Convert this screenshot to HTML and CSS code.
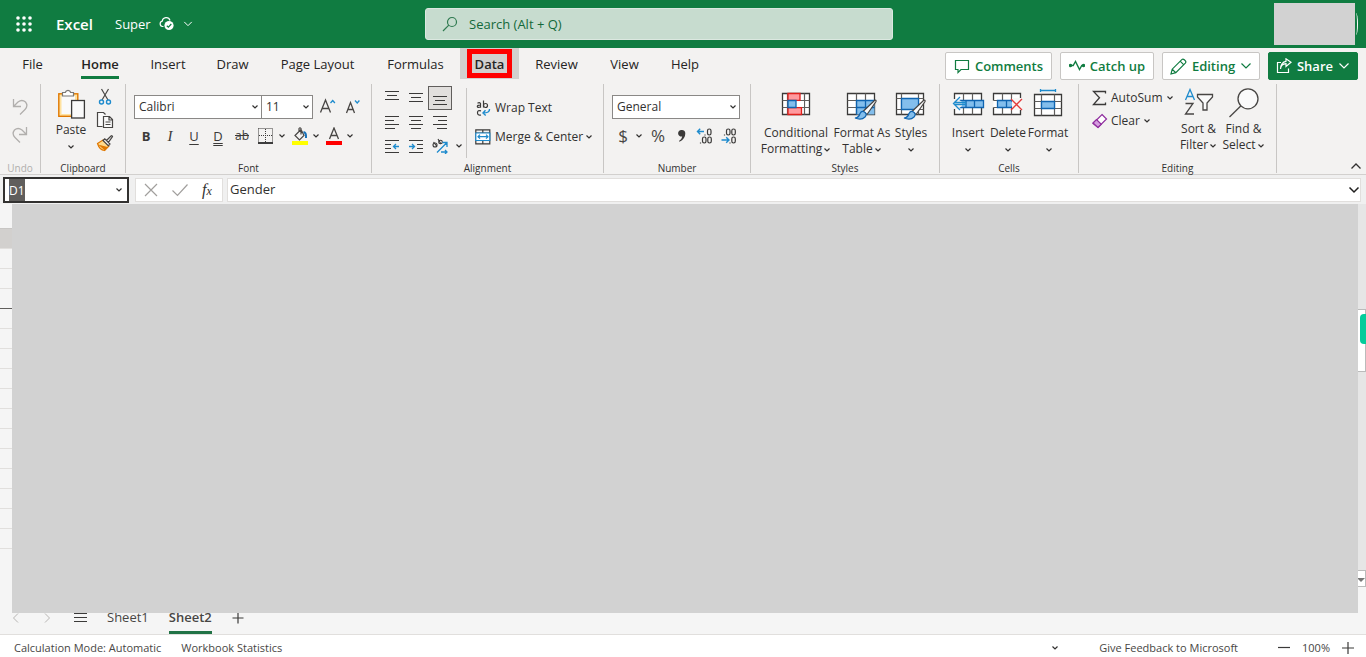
FILE: index.html
```html
<!DOCTYPE html>
<html lang="en">
<head>
<meta charset="utf-8">
<meta name="viewport" content="width=device-width, initial-scale=1">
<title>Super - Excel</title>
<link rel="stylesheet" href="styles.css">
</head>
<body>
<svg class="defs" width="0" height="0" aria-hidden="true">
  <symbol id="chev" viewBox="0 0 8 8"><path d="M1.5 2.5 4 5 6.500 2.500" fill="none" stroke="currentColor" stroke-width="1.200"/></symbol>
  <symbol id="chev-lg" viewBox="0 0 12 12"><path d="M1.500 3.500 6 8 10.500 3.500" fill="none" stroke="currentColor" stroke-width="1.200"/></symbol>
</svg>

<header class="topbar">
  <div class="brand">
    <button class="launcher" aria-label="App launcher">
      <svg width="18" height="18" viewBox="0 0 18 18" fill="#fff"><circle cx="3" cy="3" r="1.800"/><circle cx="9" cy="3" r="1.800"/><circle cx="15" cy="3" r="1.800"/><circle cx="3" cy="9" r="1.800"/><circle cx="9" cy="9" r="1.800"/><circle cx="15" cy="9" r="1.800"/><circle cx="3" cy="15" r="1.800"/><circle cx="9" cy="15" r="1.800"/><circle cx="15" cy="15" r="1.800"/></svg>
    </button>
    <span class="app-name">Excel</span>
    <button class="doc-name"><span>Super</span>
      <svg width="16" height="16" viewBox="0 0 16 16"><path d="M4.500 10.500H3.500a2.700 2.700 0 0 1-.3-5.300A4 4 0 0 1 11 4.500" fill="none" stroke="#fff" stroke-width="1.200"/><circle cx="10" cy="9.500" r="4.600" fill="#fff"/><path d="M7.800 9.700 9.400 11.200 12.300 8" fill="none" stroke="#107c41" stroke-width="1.200"/></svg>
      <svg class="doc-chev" width="10" height="10"><use href="#chev-lg"/></svg>
    </button>
  </div>
  <label class="search">
    <svg width="16" height="16" viewBox="0 0 16 16" fill="none" stroke="#2f7a50" stroke-width="1.200"><circle cx="10" cy="6" r="4.500"/><path d="M6.800 9.200 1 15"/></svg>
    <input type="text" placeholder="Search (Alt + Q)" aria-label="Search">
  </label>
  <div class="account"><div class="account-block"></div></div>
</header>

<div class="tabrow">
  <nav class="tabs">
    <button>File</button><button class="current"><span>Home</span></button><button>Insert</button><button>Draw</button><button>Page Layout</button><button>Formulas</button><button class="data"><span>Data</span></button><button>Review</button><button>View</button><button>Help</button>
  </nav>
  <div class="actions">
    <button class="act w-comments"><svg width="16" height="16" viewBox="0 0 16 16" fill="none" stroke="currentColor" stroke-width="1.200"><path d="M1.500 2.500h13v9H7L4 14.500v-3H1.500z"/></svg>Comments</button>
    <button class="act w-catch"><svg width="16" height="16" viewBox="0 0 16 16" fill="none" stroke="currentColor" stroke-width="1.400"><path d="M1.500 7.500h2.700L6.500 3.500l4 8 2.300-4h2"/><circle cx="1.500" cy="7.500" r="1" fill="currentColor"/><circle cx="14.500" cy="7.500" r="1" fill="currentColor"/></svg>Catch up</button>
    <button class="act w-edit"><svg width="17" height="17" viewBox="0 0 17 17" fill="none" stroke="currentColor" stroke-width="1.200"><path d="M1 16l1.200-4.800L11.800 1.600q1.200-1 2.500.2l.9.900q1.200 1.300.1 2.500L5.800 14.700zM10.200 3.200l3.600 3.600M2.200 11.200l3.600 3.500"/></svg>Editing<svg width="12" height="12"><use href="#chev-lg"/></svg></button>
    <button class="act share w-share"><svg width="16" height="16" viewBox="0 0 16 16" fill="none" stroke="currentColor" stroke-width="1.200"><path d="M5 4.500H1.500v10h11v-4M4.500 11q.5-5 5.500-5.300V8.500L15 4.300 10 .8v2.500Q5 4 4.500 11z"/></svg>Share<svg width="12" height="12"><use href="#chev-lg"/></svg></button>
  </div>
</div>

<div class="ribbon">
  <section class="group g-undo">
    <div class="body">
      <button class="ico" aria-label="Undo"><svg width="18" height="18" viewBox="0 0 18 18" fill="none" stroke="#b1afad" stroke-width="1.300"><path d="M2.500 1v7.500H10M2.500 8.500 7 4q4-3 7.500 0 3 4-.5 7.500L9 16.500"/></svg></button>
      <button class="ico" aria-label="Redo"><svg width="18" height="18" viewBox="0 0 18 18" fill="none" stroke="#b1afad" stroke-width="1.300"><path d="M15.500 1v7.500H8M15.500 8.500 11 4q-4-3-7.500 0-3 4 .5 7.500l5 5"/></svg></button>
    </div>
    <h2 class="dim">Undo</h2>
  </section>

  <section class="group g-clip">
    <div class="body">
      <button class="paste">
        <svg width="30" height="32" viewBox="0 0 30 32"><rect x="2.800" y="5.800" width="19" height="22.500" fill="#ffe2a0" stroke="#e07800" stroke-width="1.400"/><rect x="5.500" y="8" width="13.500" height="18" fill="#fafafa"/><path d="M6.500 8V4.500h2.800a2.800 2.800 0 0 1 5.400 0h2.800V8z" fill="#fff" stroke="#797775" stroke-width="1.200"/><rect x="15.600" y="12.500" width="12.800" height="17.500" fill="#fafafa" stroke="#3b3a39" stroke-width="1.300"/></svg>
        <span>Paste</span><svg class="chev" width="8" height="8"><use href="#chev"/></svg>
      </button>
      <div class="stack">
        <button class="ico" aria-label="Cut"><svg width="18" height="18" viewBox="0 0 18 18" fill="none"><path d="M5.500 1 12 12M12.500 1 6 12" stroke="#484644" stroke-width="1.200"/><circle cx="5.500" cy="14" r="2" stroke="#1e8bcd" stroke-width="1.400"/><circle cx="12.500" cy="14" r="2" stroke="#1e8bcd" stroke-width="1.400"/></svg></button>
        <button class="ico" aria-label="Copy"><svg width="18" height="18" viewBox="0 0 18 18" fill="#fafafa" stroke="#484644" stroke-width="1.200"><path d="M6.500 15.500h-5v-14h6l2 2M7.500 5.500h6l3 3v8h-9zM13 5.500v3.500h3.500M9.500 11h5M9.500 13.500h5"/></svg></button>
        <button class="ico" aria-label="Format painter"><svg width="18" height="18" viewBox="0 0 18 18"><path d="M1.500 9.500 7 6l6 6-4.500 4.500q-5-.5-7-7z" fill="#ffd98a" stroke="#e07800" stroke-width="1.200"/><path d="M2 10.500 11.500 13 9 16.500z" fill="#e07800"/><path d="M7 6.500 8.800 4.800 14 10l-1.700 1.700zM10.500 6.500 15 2q1.200-.8 1.500.5L12.400 8.300" fill="#fafafa" stroke="#484644" stroke-width="1.200"/></svg></button>
      </div>
    </div>
    <h2>Clipboard</h2>
  </section>

  <section class="group g-font">
    <div class="body">
      <div class="row fonts">
        <div class="pick font-name"><select aria-label="Font"><option>Calibri</option></select><svg class="chev" width="8" height="8"><use href="#chev"/></svg></div>
        <div class="pick font-size"><select aria-label="Font size"><option>11</option></select><svg class="chev" width="8" height="8"><use href="#chev"/></svg></div>
        <button class="ico grow" aria-label="Increase font size"><svg width="18" height="18" viewBox="0 0 18 18" fill="none"><path d="M1.500 14.500 6.500 2l5 12.500M3 10.500h7" stroke="#484644" stroke-width="1.300"/><path d="M11.500 5 13.700 2.500 15.900 5" stroke="#1e8bcd" stroke-width="1.300"/></svg></button>
        <button class="ico" aria-label="Decrease font size"><svg width="18" height="18" viewBox="0 0 18 18" fill="none"><path d="M2.500 15 6.500 4.500l4 10.500M4 11.500h5" stroke="#484644" stroke-width="1.300"/><path d="M11 2.500 13.200 5 15.400 2.500" stroke="#1e8bcd" stroke-width="1.300"/></svg></button>
      </div>
      <div class="row formats">
        <button class="ltr bold">B</button><button class="ltr ital">I</button><button class="ltr und">U</button><button class="ltr dbl">D</button><button class="ltr strike">ab</button>
        <button class="ico" aria-label="Borders"><svg width="16" height="16" viewBox="0 0 16 16" fill="none" stroke="#3b3a39"><path d="M.5.500h14v13M.5.500v13M7.500 1v13M1 7.500h14" stroke-dasharray="1 1"/><path d="M0 15h15" stroke="#000" stroke-width="1.500"/></svg></button>
        <svg class="chev" width="8" height="8"><use href="#chev"/></svg>
        <button class="ico" aria-label="Fill color"><svg width="16" height="18" viewBox="0 0 16 18" fill="none"><path d="M3 8.500 9 2.500l3 6-4.500 4.500zM7 4V1.500q1-1.500 2 0v6" stroke="#484644" stroke-width="1.200"/><path d="M11.500 5q3 .5 2.500 6" stroke="#1670b8" stroke-width="2"/><path d="M0 14h16v4H0z" fill="#ff0"/></svg></button>
        <svg class="chev" width="8" height="8"><use href="#chev"/></svg>
        <button class="ico" aria-label="Font color"><svg width="16" height="18" viewBox="0 0 16 18" fill="none"><path d="M3.500 12 8 1l4.500 11M5 8.500h6" stroke="#484644" stroke-width="1.300"/><path d="M0 14h16v4H0z" fill="red"/></svg></button>
        <svg class="chev" width="8" height="8"><use href="#chev"/></svg>
      </div>
    </div>
    <h2>Font</h2>
  </section>

  <section class="group g-align">
    <div class="body">
      <div class="align-grid">
        <button class="ico" aria-label="Top align"><svg width="14" height="14" viewBox="0 0 14 14" stroke="#3b3a39"><path d="M0 .5h14M2 4.500h10M0 8.500h14"/></svg></button>
        <button class="ico" aria-label="Middle align"><svg width="14" height="14" viewBox="0 0 14 14" stroke="#3b3a39"><path d="M0 2.500h14M2 6.500h10M0 10.500h14"/></svg></button>
        <button class="ico on" aria-label="Bottom align"><svg width="14" height="14" viewBox="0 0 14 14" stroke="#3b3a39"><path d="M0 5.500h14M2 9.500h10M0 13.500h14"/></svg></button><i></i>
        <button class="ico" aria-label="Align left"><svg width="14" height="14" viewBox="0 0 14 14" stroke="#3b3a39"><path d="M0 1.500h14M0 5.500h9M0 9.500h14M0 13.500h10"/></svg></button>
        <button class="ico" aria-label="Center"><svg width="14" height="14" viewBox="0 0 14 14" stroke="#3b3a39"><path d="M0 1.500h14M2 5.500h10M0 9.500h14M2 13.500h10"/></svg></button>
        <button class="ico" aria-label="Align right"><svg width="14" height="14" viewBox="0 0 14 14" stroke="#3b3a39"><path d="M0 1.500h14M5 5.500h9M0 9.500h14M4 13.500h10"/></svg></button><i></i>
        <button class="ico" aria-label="Decrease indent"><svg width="14" height="14" viewBox="0 0 14 14" fill="none" stroke="#3b3a39"><path d="M0 1.500h14M0 5.500h6M0 9.500h6M0 13.500h14"/><path d="M14 7.500H8.500M11 5 8.500 7.500 11 10" stroke="#1e8bcd" stroke-width="1.300"/></svg></button>
        <button class="ico" aria-label="Increase indent"><svg width="14" height="14" viewBox="0 0 14 14" fill="none" stroke="#3b3a39"><path d="M0 1.500h14M8 5.500h6M8 9.500h6M0 13.500h14"/><path d="M0 7.500h5.500M3 5l2.500 2.500L3 10" stroke="#1e8bcd" stroke-width="1.300"/></svg></button>
        <button class="ico" aria-label="Orientation"><svg width="16" height="16" viewBox="0 0 16 16" fill="none" stroke="#3b3a39" stroke-width="1.100"><circle cx="3" cy="7" r="2"/><path d="M1.500 4 5 8.500M6 1l3 5"/><circle cx="8.500" cy="4" r="1.800"/><g stroke="#1e8bcd" stroke-width="1.300"><path d="M5 14.500 15 4.500M10.500 4.500H15V9M9 14h6M13 12l2 2-2 2"/></g></svg></button>
        <svg class="chev" width="8" height="8"><use href="#chev"/></svg>
      </div>
      <div class="wraps">
        <button class="line"><svg width="16" height="18" viewBox="0 0 16 18" fill="none" stroke="#3b3a39" stroke-width="1.200"><path d="M2.500 4.200q2-1.200 3 .3v4.200M5.500 6q-3.200 0-3.200 1.500T5.500 8M8.500 1.500v7"/><circle cx="10.500" cy="6.500" r="2"/><path d="M6 11.800q-3.500-1-3.500 2t3.500 2.200"/><path d="M14.500 10q.5 4-6.500 4M10.500 11.200 8 14l2.700 2.500" stroke="#1e8bcd" stroke-width="1.400"/></svg>Wrap Text</button>
        <button class="line"><svg width="16" height="16" viewBox="0 0 16 16" fill="none" stroke="#3b3a39" stroke-width="1.200"><path d="M.8.800h14v14H.8zM.8 4h14M.8 11.500h14M7.800 1v3M7.800 11.500v3"/><path d="M.8 4h14v7.500H.8z" fill="#fff" stroke="#1e8bcd"/><path d="M3 7.700h10M5 5.700 3 7.700l2 2M11 5.700l2 2-2 2" stroke="#1e8bcd"/></svg>Merge &amp; Center<svg class="chev" width="8" height="8"><use href="#chev"/></svg></button>
      </div>
    </div>
    <h2>Alignment</h2>
  </section>

  <section class="group g-num">
    <div class="body">
      <div class="pick num-format"><select aria-label="Number format"><option>General</option></select><svg class="chev" width="8" height="8"><use href="#chev"/></svg></div>
      <div class="row nums">
        <button class="sym">$</button><svg class="chev" width="8" height="8"><use href="#chev"/></svg><button class="sym pct">%</button>
        <button class="ico comma" aria-label="Comma style"><svg width="10" height="14" viewBox="0 0 10 14"><path d="M4.500 1a3.300 3.300 0 0 1 3.800 3.500Q8.300 10 2.500 12.800L2 12q3-2 3.200-4.500A3.300 3.300 0 1 1 4.500 1z" fill="#3b3a39"/></svg></button>
        <button class="ico dec" aria-label="Increase decimal"><svg width="18" height="18" viewBox="0 0 18 18" fill="none" stroke="#3b3a39" stroke-width="1.200"><path d="M9 7.500v1M4.500 15.500v1"/><rect x="11.500" y="2" width="3.500" height="6" rx="1.700"/><rect x="6.500" y="10" width="3.500" height="6" rx="1.700"/><rect x="11.800" y="10" width="3.500" height="6" rx="1.700"/><path d="M8 4.500H1.500M4.200 1.800 1.500 4.500l2.700 2.700" stroke="#1e8bcd" stroke-width="1.400"/></svg></button>
        <button class="ico" aria-label="Decrease decimal"><svg width="18" height="18" viewBox="0 0 18 18" fill="none" stroke="#3b3a39" stroke-width="1.200"><path d="M4.500 7.500v1M10 15.500v1"/><rect x="6.500" y="2" width="3.500" height="6" rx="1.700"/><rect x="11.800" y="2" width="3.500" height="6" rx="1.700"/><rect x="11.800" y="10" width="3.500" height="6" rx="1.700"/><path d="M1.500 13H9M6.200 10.300 9 13l-2.800 2.700" stroke="#1e8bcd" stroke-width="1.400"/></svg></button>
      </div>
    </div>
    <h2>Number</h2>
  </section>

  <section class="group g-styles">
    <div class="body">
      <button class="big b-cond"><svg width="32" height="30" viewBox="0 0 32 30"><path d="M2.500 2.500h27v21h-27z" fill="#fff" stroke="#3b3a39" stroke-width="1.300"/><path d="M2.500 9.500h27M2.500 16.500h27M7.500 2.500v21M24.500 2.500v21" stroke="#605e5c" stroke-width="1.200"/><path d="M8 2.500h12v7H8zM8 16.500h13.500v7H8z" fill="#ff9a9e" stroke="#e0201c" stroke-width="1.300"/><path d="M16 10.100h8v5.800h-8z" fill="#fff"/><path d="M8 9.500h8v7H8z" fill="#83beec" stroke="#0f64b0" stroke-width="1.300"/></svg><span>Conditional<br>Formatting<svg class="chev" width="8" height="8"><use href="#chev"/></svg></span></button>
      <button class="big b-table"><svg width="32" height="30" viewBox="0 0 32 30"><path d="M1.500 2.500h27v21h-27z" fill="#fff" stroke="#3b3a39" stroke-width="1.300"/><path d="M10.500 9.500h18v14h-18z" fill="#83beec"/><path d="M1.500 9.500h27M1.500 16.500h9M10.500 2.500v21M19.500 2.500v7" stroke="#605e5c" stroke-width="1.200"/><path d="M10.500 23.500v-14h18M10.500 16.500h18M19.500 9.500v14" fill="none" stroke="#0f64b0" stroke-width="1.300"/><path d="M17 20.500 28.500 9.500q2-1.200 1.500 1L21 23.500z" fill="#fafafa" stroke="#484644" stroke-width="1.200"/><path d="M9 27q4-.5 5-4.500 1.500-3 4.500-1.500 3 2 .5 5-3.500 3.500-10 1z" fill="#83beec" stroke="#0f64b0" stroke-width="1.200"/></svg><span>Format As<br>Table<svg class="chev" width="8" height="8"><use href="#chev"/></svg></span></button>
      <button class="big b-style"><svg width="32" height="30" viewBox="0 0 32 30"><path d="M1.500 2.500h27v21h-27z" fill="#fff" stroke="#3b3a39" stroke-width="1.300"/><path d="M1.500 7.500h27M1.500 18.500h27M6.500 2.500v21M23.500 2.500v21" stroke="#605e5c" stroke-width="1.200"/><path d="M6.500 7.500h17v11h-17z" fill="#83beec" stroke="#0f64b0" stroke-width="1.300"/><path d="M17 20.500 28.500 9.500q2-1.200 1.500 1L21 23.500z" fill="#fafafa" stroke="#484644" stroke-width="1.200"/><path d="M9 27q4-.5 5-4.500 1.500-3 4.500-1.500 3 2 .5 5-3.500 3.500-10 1z" fill="#83beec" stroke="#0f64b0" stroke-width="1.200"/></svg><span>Styles<br><svg class="chev" width="8" height="8"><use href="#chev"/></svg></span></button>
    </div>
    <h2>Styles</h2>
  </section>

  <section class="group g-cells">
    <div class="body">
      <button class="big"><svg width="34" height="30" viewBox="0 0 34 30" fill="none"><path d="M3.500 2.500h27v21h-27z" fill="#fff" stroke="#3b3a39" stroke-width="1.300"/><path d="M3.500 9.500h27M3.500 16.500h27M12.500 2.500v21M21.500 2.500v21" stroke="#605e5c" stroke-width="1.200"/><path d="M9 9.500h23.500v7H9z" fill="#83beec" stroke="#0f64b0" stroke-width="1.300"/><path d="M15 9.500v7M23.500 9.500v7" stroke="#0f64b0" stroke-width="1.300"/><path d="M0 8h7l4 3v4l-4 3H0z" fill="#f3f2f1"/><path d="M9 6 2.500 12.500 9 19M3 11.500h12M3 13.500h12" stroke="#1e8bcd" stroke-width="1.300"/></svg><span>Insert<br><svg class="chev" width="8" height="8"><use href="#chev"/></svg></span></button>
      <button class="big"><svg width="32" height="30" viewBox="0 0 32 30" fill="none"><path d="M1.500 9.500v-7h27v21h-27v-7" fill="#fff" stroke="#3b3a39" stroke-width="1.300"/><path d="M1.500 9.500h27M1.500 16.500h27M10.500 2.500v21M19.500 2.500v21" stroke="#605e5c" stroke-width="1.200"/><path d="M5.500 9.500h14l2.500 3.500-2.500 3.500h-14zM14.500 9.500v7" fill="#83beec" stroke="#0f64b0" stroke-width="1.300"/><path d="M20 7h10v12H20z" fill="#f8f7f6"/><path d="M19 8 30 19M30 8 19 19" stroke="#e33b3b" stroke-width="1.300"/></svg><span>Delete<br><svg class="chev" width="8" height="8"><use href="#chev"/></svg></span></button>
      <button class="big tall"><svg width="32" height="34" viewBox="0 0 32 34" fill="none"><path d="M2.500 6.500h27v21h-27z" fill="#fff" stroke="#3b3a39" stroke-width="1.300"/><path d="M2.500 13.500h27M2.500 20.500h27M9.500 6.500v21M22.500 6.500v21" stroke="#605e5c" stroke-width="1.200"/><path d="M9.500 13.500h13v7h-13z" fill="#83beec" stroke="#0f64b0" stroke-width="1.300"/><path d="M8.500 1v3M23.500 1v3M8.500 2.500h15" stroke="#1e8bcd" stroke-width="1.300"/></svg><span>Format<br><svg class="chev" width="8" height="8"><use href="#chev"/></svg></span></button>
    </div>
    <h2>Cells</h2>
  </section>

  <section class="group g-edit">
    <div class="body">
      <div class="sums">
        <button class="line"><svg width="16" height="16" viewBox="0 0 16 16" fill="none" stroke="#3b3a39" stroke-width="1.300"><path d="M13.500 3.500v-2h-12l6 6.300-6 6.700h12v-2"/></svg>AutoSum<svg class="chev" width="8" height="8"><use href="#chev"/></svg></button>
        <button class="line"><svg width="16" height="16" viewBox="0 0 16 16" stroke="#8f2d9e" stroke-width="1.200"><path d="M10 1.500 14.500 6 6 14.500 1 10.500z" fill="#fff"/><path d="M1 10 4.500 6.500 9.300 11.200 6 14.500z" fill="#d59ddf"/></svg>Clear<svg class="chev" width="8" height="8"><use href="#chev"/></svg></button>
      </div>
      <button class="big b-sort"><svg width="30" height="30" viewBox="0 0 30 30" fill="none"><path d="M1.500 12 6 1.500l4.500 10.500M3 8.500h6" stroke="#1e8bcd" stroke-width="1.300"/><path d="M1.500 15.500H9L1.500 26H10" stroke="#484644" stroke-width="1.300"/><path d="M13.500 6.500h15v2.500l-5.500 6v7h-4v-7l-5.500-6z" fill="#fafafa" stroke="#484644" stroke-width="1.300"/></svg><span>Sort &amp;<br>Filter<svg class="chev" width="8" height="8"><use href="#chev"/></svg></span></button>
      <button class="big b-find"><svg width="30" height="30" viewBox="0 0 30 30" fill="none" stroke="#484644" stroke-width="1.300"><circle cx="19" cy="10.800" r="10" fill="#fafafa"/><path d="M12 17.800.5 29"/></svg><span>Find &amp;<br>Select<svg class="chev" width="8" height="8"><use href="#chev"/></svg></span></button>
    </div>
    <h2>Editing</h2>
  </section>
  <button class="collapse" aria-label="Collapse ribbon"><svg width="12" height="12" viewBox="0 0 12 12"><path d="M1.500 8.500 6 4l4.500 4.500" fill="none" stroke="#323130" stroke-width="1.300"/></svg></button>
</div>

<div class="formulabar">
  <div class="namebox"><span class="sel">D1</span><button class="ico" aria-label="Name list"><svg class="chev" width="8" height="8"><use href="#chev"/></svg></button></div>
  <div class="fx">
    <button class="ico" aria-label="Cancel"><svg width="14" height="14" viewBox="0 0 14 14" stroke="#a19f9d" stroke-width="1.200"><path d="M1 1l12 12M13 1 1 13"/></svg></button>
    <button class="ico" aria-label="Enter"><svg width="16" height="14" viewBox="0 0 16 14" fill="none" stroke="#a19f9d" stroke-width="1.200"><path d="M.5 7.500 5.500 12.500 15.500 1.500"/></svg></button>
    <button class="fxb" aria-label="Insert function"><i>f</i><small>x</small></button>
  </div>
  <div class="formula"><input type="text" value="Gender" aria-label="Formula"><button class="ico" aria-label="Expand"><svg width="12" height="12" viewBox="0 0 12 12"><path d="M1.500 3.500 6 8 10.500 3.500" fill="none" stroke="#201f1e" stroke-width="1.500"/></svg></button></div>
</div>

<main class="work">
  <div class="sheet">
    <div class="rows">
      <b class="corner"></b><b class="head"></b><b></b><b></b><b class="dark"></b><b></b><b></b><b></b><b></b><b></b><b></b><b></b><b></b><b></b><b></b><b></b><b></b><b></b>
    </div>
    <div class="scroll"><div class="thumb"></div><div class="down"><svg width="8" height="6" viewBox="0 0 8 6"><path d="M0 1h8L4 5z" fill="#777"/></svg></div></div>
  </div>
  <div class="sheets">
    <button class="ico" aria-label="Previous sheet"><svg width="8" height="12" viewBox="0 0 8 12" fill="none" stroke="#b8b6b4"><path d="M6 1.500 1.500 6 6 10.500"/></svg></button>
    <button class="ico" aria-label="Next sheet"><svg width="8" height="12" viewBox="0 0 8 12" fill="none" stroke="#b8b6b4"><path d="M2 1.500 6.500 6 2 10.500"/></svg></button>
    <button class="ico list" aria-label="All sheets"><svg width="13" height="12" viewBox="0 0 13 12" stroke="#3b3a39"><path d="M0 1.500h13M0 5.500h13M0 9.500h13"/></svg></button>
    <button class="sh">Sheet1</button>
    <button class="sh active">Sheet2</button>
    <button class="ico" aria-label="New sheet"><svg width="12" height="12" viewBox="0 0 12 12" stroke="#3b3a39" stroke-width="1.200"><path d="M6 .5v11M.5 6h11"/></svg></button>
  </div>
  <div class="cover"></div>
  <div class="pin"></div>
</main>

<footer class="status">
  <span>Calculation Mode: Automatic</span>
  <span>Workbook Statistics</span>
  <button class="ico push" aria-label="Status options"><svg class="chev" width="8" height="8"><use href="#chev"/></svg></button>
  <button class="feedback">Give Feedback to Microsoft</button>
  <button class="ico" aria-label="Zoom out"><svg width="12" height="12" viewBox="0 0 12 12" stroke="#3b3a39" stroke-width="1.200"><path d="M0 5.500h12"/></svg></button>
  <button class="zoom">100%</button>
  <button class="ico" aria-label="Zoom in"><svg width="12" height="12" viewBox="0 0 12 12" stroke="#3b3a39" stroke-width="1.200"><path d="M6 0v12M0 6h12"/></svg></button>
</footer>
</body>
</html>
```
FILE: styles.css
```css
* { box-sizing: border-box; }
body {
  margin: 0;
  min-height: 100vh;
  display: flex;
  flex-direction: column;
  font-family: "Open Sans", "Noto Sans", sans-serif;
  font-size: 12px;
  line-height: 16px;
  color: #323130;
  background: #f3f2f1;
}
.defs { position: absolute; }
svg { display: block; flex: none; }
button, input, select {
  font: inherit;
  color: inherit;
  background: none;
  border: 0;
  border-radius: 0;
  padding: 0;
  margin: 0;
}
button { white-space: nowrap; }
h2 { margin: 0; font-size: 10px; line-height: 10px; font-weight: 400; text-align: center; }
.ico { display: flex; align-items: center; justify-content: center; }
.row { display: flex; align-items: center; }
.chev { color: #323130; }

/* Title bar */
.topbar {
  height: 48px;
  display: grid;
  grid-template-columns: 410fr 468px 462fr;
  align-items: center;
  padding: 0 11px 0 15px;
  background: #107c41;
  color: #fff;
}
.brand { display: flex; align-items: center; }
.app-name { margin-left: 23px; font-size: 15px; font-weight: 600; width: 59px; }
.doc-name { display: flex; align-items: center; font-size: 13px; gap: 8px; }
.search {
  display: flex;
  align-items: center;
  gap: 11px;
  height: 32px;
  padding: 0 16px;
  border-radius: 3px;
  border: 1px solid #dbe8e0;
  background: #c7dccf;
}
.search input { flex: 1; min-width: 0; font-size: 13px; color: #13693a; outline: 0; }
.search input::placeholder { color: #13693a; opacity: 1; }
.account { justify-self: end; }
.account-block { position: relative; width: 81px; height: 42px; background: #d2d2d2; }
.account-block::after {
  content: "";
  position: absolute;
  right: -3px;
  top: 10px;
  width: 3px;
  height: 22px;
  border-right: 1px solid #fff;
  border-radius: 0 100% 100% 0;
}

/* Tabs */
.tabrow { display: flex; justify-content: space-between; height: 36px; padding: 0 8px 0 6px; }
.tabs {
  display: grid;
  grid-template-columns: 59px 70px 66px 63px 107px 89px 59px 75px 61px 60px;
  height: 31px;
  font-size: 13px;
  color: #252423;
}
.tabs button:first-child { padding-right: 6px; }
.tabs .current { font-weight: 600; display: flex; justify-content: center; }
.tabs .current span { height: 31px; line-height: 32px; border-bottom: 3px solid #107c41; }
.tabs .data { display: flex; align-items: center; justify-content: center; background: #d2d0ce; font-weight: 600; }
.tabs .data span {
  width: 45px;
  height: 29px;
  line-height: 20px;
  border: 5px solid #f00;
}
.actions { display: flex; gap: 8px; padding-top: 4px; }
.act {
  height: 28px;
  display: flex;
  align-items: center;
  justify-content: center;
  gap: 5px;
  font-size: 13px;
  font-weight: 600;
  color: #107c41;
  background: #fff;
  border: 1px solid #c8c6c4;
  border-radius: 2px;
}
.w-comments { width: 107px; }
.w-catch { width: 94px; }
.w-edit { width: 98px; }
.w-share { width: 90px; }
.share { background: #107c41; border-color: #107c41; color: #fff; }

/* Ribbon */
.ribbon { display: flex; height: 91px; padding-bottom: 1px; border-bottom: 1px solid #d2d0ce; }
.group { display: flex; flex-direction: column; border-right: 1px solid #c8c6c4; }
.group .body { flex: 1; display: flex; }
.g-undo { width: 41px; }
.g-undo .body { flex-direction: column; gap: 10px; padding: 14px 0 0; align-items: center; }
.dim { color: #b1afad; }
.g-clip { width: 85px; }
.g-clip .body { gap: 7px; padding: 4px 0 0 14px; }
.paste { width: 32px; display: flex; flex-direction: column; align-items: center; justify-content: flex-start; gap: 2px; }
.paste .chev { margin-top: 3px; }
.stack { display: flex; flex-direction: column; gap: 5px; }
.stack .ico { width: 22px; }
.g-font { width: 246px; }
.g-font .body { flex-direction: column; gap: 5px; padding: 11px 0 0 8px; }
.pick { display: grid; grid-template-columns: 1fr 8px; align-items: center; height: 24px; padding-right: 2px; border: 1px solid #8a8886; background: #fff; }
.pick select { grid-area: 1 / 1 / 2 / 3; appearance: none; width: 100%; height: 22px; padding-left: 4px; font-size: 12px; }
.pick .chev { grid-area: 1 / 2; pointer-events: none; }
.font-name { width: 128px; }
.font-size { width: 52px; margin-left: -1px; }
.grow { margin: 0 7px 0 6px; }
.ltr { width: 24px; height: 24px; font-size: 13px; line-height: 18px; color: #3b3a39; }
.bold { font-weight: 700; }
.ital { font-family: "Liberation Serif", serif; font-style: italic; font-size: 15px; }
.und { text-decoration: underline; text-underline-offset: 3px; }
.dbl { text-decoration: underline double; text-underline-offset: 2px; }
.strike { text-decoration: line-through; font-size: 12px; }
.formats .ico { margin-left: 4px; }
.formats .chev { margin-left: 4px; }
.formats .chev + .ico { margin-left: 6px; }
.g-align { width: 232px; }
.align-grid { display: grid; grid-template-columns: 24px 24px 24px 14px; grid-template-rows: 24px 24px 24px; padding: 2px 0 0 8px; height: 76px; align-items: center; justify-items: center; }
.align-grid .ico { width: 24px; height: 24px; }
.align-grid .on { border: 1px solid #605e5c; background: #e1dfdd; }
.wraps { height: 70px; margin-top: 4px; border-left: 1px solid #c8c6c4; padding: 11px 0 0 8px; display: flex; flex-direction: column; gap: 11px; }
.line { display: flex; align-items: center; gap: 4px; height: 18px; }
.wraps .chev { margin-left: -2px; }
.g-num { width: 147px; }
.g-num .body { flex-direction: column; gap: 5px; padding: 11px 0 0 8px; }
.num-format { width: 128px; }
.nums { height: 24px; gap: 6px; }
.nums .chev { margin-left: -5px; }
.sym { width: 22px; font-size: 17px; color: #484644; }
.nums .pct { width: 18px; }
.nums .comma { margin-left: 4px; }
.nums .dec { margin-left: 3px; }
.g-styles { width: 189px; }
.g-styles .body { padding-left: 8px; }
.big { display: flex; flex-direction: column; align-items: center; justify-content: flex-start; gap: 4px; padding-top: 7px; text-align: center; }
.big span .chev { display: inline-block; margin-left: 1px; vertical-align: middle; }
.b-cond { width: 74px; }
.b-table { width: 58px; }
.b-style { width: 40px; }
.g-cells { width: 139px; }
.g-cells .body { padding-left: 8px; }
.g-cells .big { width: 40px; }
.g-cells .tall { padding-top: 4px; gap: 3px; }
.g-edit { width: 198px; }
.sums { width: 97px; padding: 5px 0 0 13px; display: flex; flex-direction: column; gap: 5px; }
.sums .line { gap: 3px; }
.g-edit .big { gap: 3px; padding-top: 4px; }
.b-sort { width: 45px; }
.b-find { width: 45px; }
.collapse { margin-left: auto; align-self: flex-end; padding: 0 4px 1px 0; }

/* Formula bar */
.formulabar { display: flex; height: 29px; padding: 2px 5px 1px 3px; background: #f0f0f0; }
.namebox {
  width: 126px;
  display: flex;
  align-items: center;
  justify-content: space-between;
  padding: 0 4px;
  border: 2px solid #323130;
  background: #fff;
}
.sel { background: #605e5c; color: #fff; height: 22px; line-height: 24px; margin-right: auto; }
.fx { display: flex; align-items: center; gap: 14px; width: 88px; margin: 1px 4px 1px 6px; padding: 0 8px; background: #fff; border: 1px solid #e1dfdd; }
.fxb { font-family: "Liberation Serif", serif; font-size: 16px; font-style: italic; }
.fxb small { font-size: 12px; }
.formula { flex: 1; display: flex; margin: 1px 0; padding-left: 2px; background: #fff; border: 1px solid #e1dfdd; }
.formula input { flex: 1; min-width: 0; outline: 0; font-size: 13px; line-height: 16px; padding-bottom: 2px; }

/* Work area */
.work { flex: 1; display: flex; flex-direction: column; position: relative; min-height: 300px; background: #f5f5f5; }
.sheet { flex: 1; display: flex; justify-content: space-between; }
.rows { width: 12px; }
.rows b { display: block; height: 20px; border-bottom: 1px solid #e1dfdd; }
.rows .corner { height: 25px; border-bottom-color: #c8c6c4; }
.rows .head { background: #d2d0ce; }
.rows .dark { border-bottom-color: #605e5c; }
.rows b:last-child { border: 0; }
.scroll { width: 10px; display: flex; flex-direction: column; justify-content: space-between; padding-top: 105px; margin-bottom: 14px; background: #e6e6e6; }
.thumb { height: 63px; background: #fff; border: 1px solid #bbb; }
.down { height: 17px; padding-top: 6px; background: #fff; border: 1px solid #bbb; }
.sheets { height: 34px; display: flex; align-items: center; padding: 0 12px; border-bottom: 1px solid #e1dfdd; }
.sheets .ico { margin-right: 23px; }
.sheets .list { margin-right: 20px; }
.sh { height: 33px; margin-right: 20px; padding-top: 2px; font-size: 13px; border-bottom: 3px solid transparent; color: #484644; }
.sh.active { font-weight: 600; border-color: #217346; }
.cover { position: absolute; inset: 0 8px 22px 12px; background: #d2d2d2; }
.pin { position: absolute; top: 110px; right: 0; width: 6px; height: 30px; background: #04cc9b; border-radius: 4px 0 0 4px; }

/* Status bar */
.status { height: 22px; display: flex; align-items: center; padding: 3px 12px 0 14px; background: #fff; font-size: 11px; color: #484644; gap: 20px; }
.push { margin: 0 20px 0 auto; }
.status .zoom { margin: 0 -8px; }
.feedback { margin-right: 20px; }
```
